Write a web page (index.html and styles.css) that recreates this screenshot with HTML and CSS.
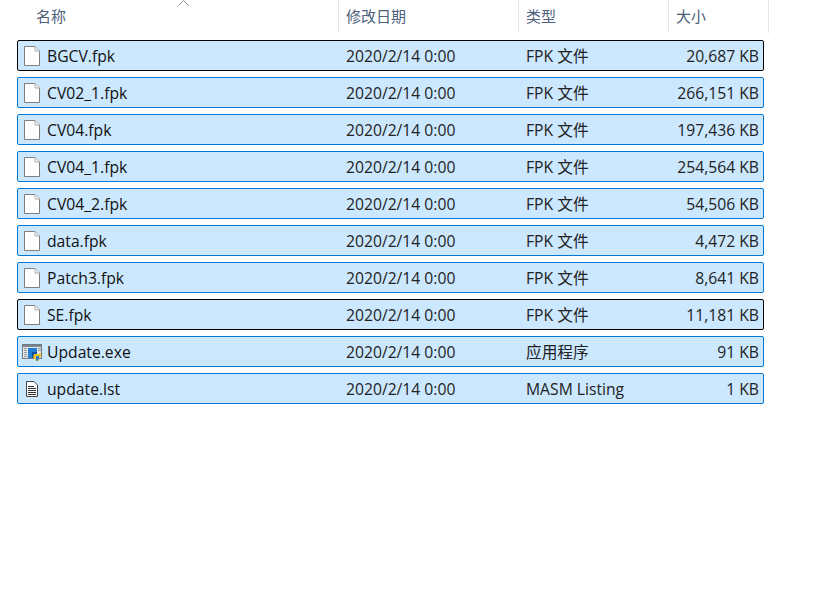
FILE: index.html
```html
<!DOCTYPE html>
<html lang="zh">
<head>
<meta charset="utf-8">
<title>文件列表</title>
<link rel="stylesheet" href="styles.css">
</head>
<body>
<svg class="defs" width="0" height="0" aria-hidden="true">
  <symbol id="file" viewBox="0 0 16 20">
    <path d="M.5.5H11L15.5 5V19.5H.5Z" fill="#fff" stroke="#7f7f7f"/>
    <path d="M11 .5V5H15.5" fill="#f0f0f0" stroke="#b0b0b0"/>
  </symbol>
</svg>
<main class="explorer">
  <header class="head">
    <div class="col col-name">名称<svg class="sort" width="11" height="6" viewBox="0 0 11 6"><path d="M.5 5.5 5.5.5l5 5" fill="none" stroke="#8a8f96"/></svg></div>
    <div class="col col-date">修改日期</div>
    <div class="col col-type">类型</div>
    <div class="col col-size">大小</div>
  </header>
  <ul class="list">
    <li class="row focus"><span class="icon"><svg width="16" height="20"><use href="#file"/></svg></span><span class="name">BGCV.fpk</span><span class="date">2020/2/14 0:00</span><span class="type">FPK 文件</span><span class="size">20,687 KB</span></li>
    <li class="row"><span class="icon"><svg width="16" height="20"><use href="#file"/></svg></span><span class="name">CV02_1.fpk</span><span class="date">2020/2/14 0:00</span><span class="type">FPK 文件</span><span class="size">266,151 KB</span></li>
    <li class="row"><span class="icon"><svg width="16" height="20"><use href="#file"/></svg></span><span class="name">CV04.fpk</span><span class="date">2020/2/14 0:00</span><span class="type">FPK 文件</span><span class="size">197,436 KB</span></li>
    <li class="row"><span class="icon"><svg width="16" height="20"><use href="#file"/></svg></span><span class="name">CV04_1.fpk</span><span class="date">2020/2/14 0:00</span><span class="type">FPK 文件</span><span class="size">254,564 KB</span></li>
    <li class="row"><span class="icon"><svg width="16" height="20"><use href="#file"/></svg></span><span class="name">CV04_2.fpk</span><span class="date">2020/2/14 0:00</span><span class="type">FPK 文件</span><span class="size">54,506 KB</span></li>
    <li class="row"><span class="icon"><svg width="16" height="20"><use href="#file"/></svg></span><span class="name">data.fpk</span><span class="date">2020/2/14 0:00</span><span class="type">FPK 文件</span><span class="size">4,472 KB</span></li>
    <li class="row"><span class="icon"><svg width="16" height="20"><use href="#file"/></svg></span><span class="name">Patch3.fpk</span><span class="date">2020/2/14 0:00</span><span class="type">FPK 文件</span><span class="size">8,641 KB</span></li>
    <li class="row focus"><span class="icon"><svg width="16" height="20"><use href="#file"/></svg></span><span class="name">SE.fpk</span><span class="date">2020/2/14 0:00</span><span class="type">FPK 文件</span><span class="size">11,181 KB</span></li>
    <li class="row"><span class="icon"><svg width="20" height="17" viewBox="0 0 20 17">
      <rect x=".5" y=".5" width="19" height="14" fill="#e8e8e8" stroke="#6f7a85"/>
      <rect x="1" y="1" width="18" height="2" fill="#7d8791"/>
      <path d="M2 4.5h3M2 6.5h3M2 8.5h3M2 10.5h3M2 12.5h3M16 4.5h3M16 6.5h3" stroke="#8d97a1"/>
      <rect x="6" y="4" width="9" height="10" fill="#1f7fd8"/>
      <rect x="10" y="8" width="5" height="6" fill="#0f4f9c"/>
      <path d="M12 10h4l3-1v3l-2 2v3h-3l-1-2-2-1z" fill="#f3c425"/>
      <path d="M14 12h3v3l-2 2h-1z" fill="#2f7fc8"/>
    </svg></span><span class="name">Update.exe</span><span class="date">2020/2/14 0:00</span><span class="type">应用程序</span><span class="size">91 KB</span></li>
    <li class="row"><span class="icon"><svg width="12" height="16" viewBox="0 0 12 16">
      <path d="M.5.5h7.5l3.5 3.5v11.5H.5z" fill="#fbfbfb" stroke="#444"/>
      <path d="M2 5.5h6M2 7.5h8M2 9.5h8M2 11.5h8M2 13.5h8" stroke="#333" fill="none"/>
    </svg></span><span class="name">update.lst</span><span class="date">2020/2/14 0:00</span><span class="type">MASM Listing</span><span class="size">1 KB</span></li>
  </ul>
</main>
</body>
</html>
```
FILE: styles.css
```css
* { box-sizing: border-box; }
html, body { margin: 0; background: #fff; }
body {
  width: 828px;
  height: 590px;
  overflow: hidden;
  font-family: "Open Sans", "Noto Sans CJK SC", sans-serif;
  font-size: 15.7px;
  color: #111;
}
.defs { display: block; height: 0; }
.explorer { width: 769px; }
.head {
  display: grid;
  grid-template-columns: 339px 180px 150px 100px;
  height: 32px;
}
.col {
  position: relative;
  padding-left: 7px;
  line-height: 33px;
  font-size: 15px;
  color: #4c607a;
  border-right: 1px solid #e5e5e5;
}
.col-name { padding-left: 36px; }
.sort { position: absolute; left: 178px; top: 0; }
.list {
  list-style: none;
  margin: 8px 0 0 17px;
  padding: 0;
  width: 747px;
  display: flex;
  flex-direction: column;
  gap: 6px;
}
.row {
  display: grid;
  grid-template-columns: 29px 299px 180px 110px 1fr;
  align-items: center;
  height: 31px;
  background: #cce8ff;
  border: 1px solid #0078d7;
  border-radius: 2px;
  line-height: 29px;
  white-space: nowrap;
}
.row.focus { border-color: #000; }
.name, .date, .type, .size { padding-top: 1px; }
.icon { display: flex; justify-content: center; align-items: center; height: 29px; padding-right: 2px; }
.icon svg { display: block; }
.size { text-align: right; padding-right: 4px; }
.date, .type, .size { color: #222; }
```
